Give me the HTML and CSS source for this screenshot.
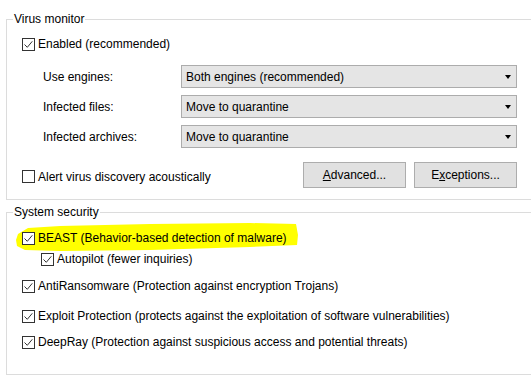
FILE: index.html
```html
<!DOCTYPE html>
<html lang="en">
<head>
<meta charset="UTF-8" />
<meta name="viewport" content="width=device-width, initial-scale=1.0"/>
<title>Guard settings</title>
<link rel="stylesheet" href="styles.css">
</head>
<body>
<!-- Virus monitor -->
<fieldset class="group monitor">
  <legend>Virus monitor</legend>
  <label class="check enabled">
    <svg class="box" viewBox="0 0 13 13" width="13" height="13"><rect x="0.5" y="0.5" width="12" height="12" fill="#fff" stroke="#333"/><path d="M2.5 6.5l2.8 2.8 5-6" fill="none" stroke="#333"/></svg>
    Enabled (recommended)
  </label>

  <div class="options">
    <span class="opt-label">Use engines:</span>
    <div class="select">Both engines (recommended)<span class="arrow"></span></div>
    <span class="opt-label">Infected files:</span>
    <div class="select">Move to quarantine<span class="arrow"></span></div>
    <span class="opt-label">Infected archives:</span>
    <div class="select">Move to quarantine<span class="arrow"></span></div>
  </div>

  <div class="bottom">
    <label class="check alert">
      <svg class="box" viewBox="0 0 13 13" width="13" height="13"><rect x="0.5" y="0.5" width="12" height="12" fill="#fff" stroke="#333"/></svg>
      Alert virus discovery acoustically
    </label>
    <div class="buttons">
      <button><u>A</u>dvanced...</button>
      <button>E<u>x</u>ceptions...</button>
    </div>
  </div>
</fieldset>

<!-- System security -->
<fieldset class="group security">
  <legend>System security</legend>
  <label class="check beast">
    <svg class="marker" viewBox="0 0 286 30" width="286" height="30"><path d="M2 18 L4 12 L14 6 L46 4 L136 2 L236 1 L282 2 L284 13 L283 23 L236 25 L136 28 L46 29 L11 28 L3 24 Z" fill="#ffff00"/></svg>
    <svg class="box" viewBox="0 0 13 13" width="13" height="13"><rect x="0.5" y="0.5" width="12" height="12" fill="#fff" stroke="#333"/><path d="M2.5 6.5l2.8 2.8 5-6" fill="none" stroke="#333"/></svg>
    <span class="txt">BEAST (Behavior-based detection of malware)</span>
  </label>
  <label class="check autopilot">
    <svg class="box" viewBox="0 0 13 13" width="13" height="13"><rect x="0.5" y="0.5" width="12" height="12" fill="#fff" stroke="#333"/><path d="M2.5 6.5l2.8 2.8 5-6" fill="none" stroke="#333"/></svg>
    Autopilot (fewer inquiries)
  </label>
  <label class="check ransom">
    <svg class="box" viewBox="0 0 13 13" width="13" height="13"><rect x="0.5" y="0.5" width="12" height="12" fill="#fff" stroke="#333"/><path d="M2.5 6.5l2.8 2.8 5-6" fill="none" stroke="#333"/></svg>
    AntiRansomware (Protection against encryption Trojans)
  </label>
  <label class="check exploit">
    <svg class="box" viewBox="0 0 13 13" width="13" height="13"><rect x="0.5" y="0.5" width="12" height="12" fill="#fff" stroke="#333"/><path d="M2.5 6.5l2.8 2.8 5-6" fill="none" stroke="#333"/></svg>
    Exploit Protection (protects against the exploitation of software vulnerabilities)
  </label>
  <label class="check deepray">
    <svg class="box" viewBox="0 0 13 13" width="13" height="13"><rect x="0.5" y="0.5" width="12" height="12" fill="#fff" stroke="#333"/><path d="M2.5 6.5l2.8 2.8 5-6" fill="none" stroke="#333"/></svg>
    DeepRay (Protection against suspicious access and potential threats)
  </label>
</fieldset>
</body>
</html>
```

FILE: styles.css
```css
html, body {
  margin: 0;
  padding: 0;
  background: #fff;
  overflow: hidden;
}

body {
  font-family: "Liberation Sans", Arial, sans-serif;
  font-size: 12px;
  color: #000;
  width: 531px;
  height: 388px;
}

/* the right edge of both boxes is cut off by the window */
.group {
  margin: 0 0 0 6px;
  padding: 0 0 0 15px;
  border: 1px solid #dcdcdc;
  border-right: none;
  width: 525px;
  box-sizing: border-box;
}

.group legend {
  margin-left: -9px;
  padding: 0 1px;
  line-height: 14px;
}

.monitor {
  margin-top: 12px;
  padding-top: 8px;
  padding-bottom: 11px;
}

.security {
  margin-top: 5px;
  padding-top: 9px;
  padding-bottom: 22px;
}

.check {
  display: flex;
  align-items: center;
  gap: 3px;
  height: 20px;
  position: relative;
  white-space: nowrap;
}

.box {
  flex: none;
  position: relative;
}

/* options grid */
.options {
  display: grid;
  grid-template-columns: 138px 336px;
  row-gap: 7px;
  margin: 11px 0 0 21px;
}

.opt-label {
  display: flex;
  align-items: center;
}

.select {
  height: 23px;
  box-sizing: border-box;
  border: 1px solid #acacac;
  background: #e5e5e5;
  padding-left: 4px;
  display: flex;
  align-items: center;
  position: relative;
}

.arrow {
  position: absolute;
  right: 5px;
  top: 9px;
  width: 0;
  height: 0;
  border-left: 3.5px solid transparent;
  border-right: 3.5px solid transparent;
  border-top: 4px solid #000;
}

.bottom {
  display: flex;
  align-items: center;
  justify-content: space-between;
  width: 495px;
  margin-top: 14px;
}

.alert {
  margin-top: 3px;
}

.buttons {
  display: flex;
  gap: 8px;
}

.buttons button {
  width: 103px;
  height: 26px;
  border: 1px solid #adadad;
  background: #e1e1e1;
  font: inherit;
  color: #000;
  padding: 0;
}

/* system security */
.marker {
  position: absolute;
  left: -8px;
  top: -6px;
}

.beast .txt {
  position: relative;
}

.autopilot {
  margin: 1px 0 0 19px;
}

.ransom {
  margin-top: 7px;
}

.exploit {
  margin-top: 10px;
}

.deepray {
  margin-top: 6px;
}
```
